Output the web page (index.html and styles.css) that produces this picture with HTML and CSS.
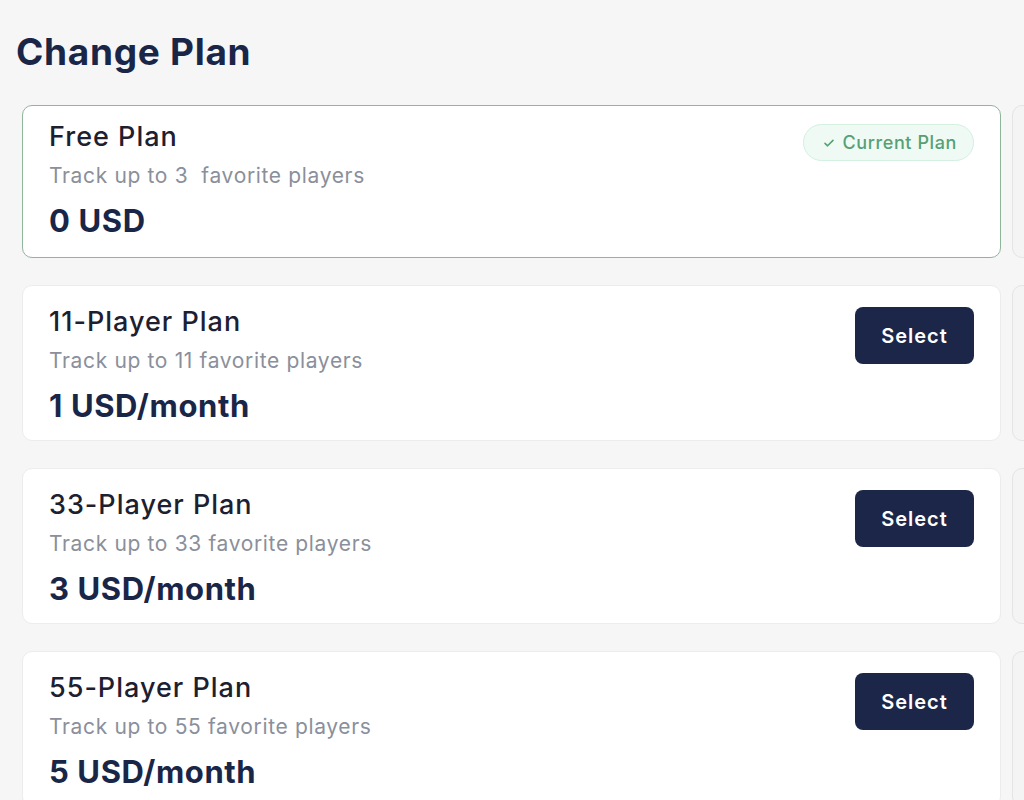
FILE: index.html
```html
<!doctype html>
<html lang="en">
  <head>
    <meta charset="UTF-8" />
    <meta name="viewport" content="width=device-width, initial-scale=1.0" />
    <title>Change Plan</title>
    <link rel="stylesheet" href="styles.css">
  </head>
  <body>
    <main class="page">
      <h1>Change Plan</h1>

      <div class="plans">
        <div class="plan-card current">
          <div class="plan-info">
            <div class="plan-name">Free Plan</div>
            <div class="plan-desc">Track up to 3&nbsp; favorite players</div>
            <div class="plan-price">0 USD</div>
          </div>
          <span class="badge">
            <svg width="12" height="12" viewBox="0 0 12 12" fill="none">
              <path d="M2 6.3 4.6 8.8 10 3.4" stroke="currentColor" stroke-width="1.6" stroke-linecap="round" stroke-linejoin="round" />
            </svg>
            Current Plan
          </span>
        </div>
        <div class="plan-card side"></div>

        <div class="plan-card">
          <div class="plan-info">
            <div class="plan-name">11-Player Plan</div>
            <div class="plan-desc">Track up to 11 favorite players</div>
            <div class="plan-price">1 USD/month</div>
          </div>
          <button class="button">Select</button>
        </div>
        <div class="plan-card side"></div>

        <div class="plan-card">
          <div class="plan-info">
            <div class="plan-name">33-Player Plan</div>
            <div class="plan-desc">Track up to 33 favorite players</div>
            <div class="plan-price">3 USD/month</div>
          </div>
          <button class="button">Select</button>
        </div>
        <div class="plan-card side"></div>

        <div class="plan-card">
          <div class="plan-info">
            <div class="plan-name">55-Player Plan</div>
            <div class="plan-desc">Track up to 55 favorite players</div>
            <div class="plan-price">5 USD/month</div>
          </div>
          <button class="button">Select</button>
        </div>
        <div class="plan-card side"></div>
      </div>
    </main>
  </body>
</html>
```

FILE: styles.css
```css
body {
  margin: 0;
  background-color: #f6f6f6;
  font-family: Inter, "Noto Sans", sans-serif;
  color: #1c2030;
  overflow: hidden;
}
.page {
  padding: 30px 0 0 16px;
}
h1 {
  margin: 0 0 31px;
  font-size: 37px;
  line-height: 44px;
  font-weight: 700;
  letter-spacing: 0.7px;
  color: #1a2648;
}
.plans {
  display: grid;
  grid-template-columns: 979px 979px;
  column-gap: 11px;
  row-gap: 27px;
  margin-left: 6px;
}
.plan-card {
  display: flex;
  justify-content: space-between;
  align-items: flex-start;
  height: 156px;
  box-sizing: border-box;
  padding: 20px 26px 16px 26px;
  background-color: #fff;
  border: 1px solid #ececec;
  border-radius: 10px;
}
.plan-card.side {
  height: auto;
  background-color: #f4f4f4;
  border-color: #e4e4e4;
}
.plan-card.current {
  height: 153px;
  padding-top: 15px;
  border: 1.5px solid #8fb59b;
}
.plan-name {
  font-size: 27px;
  line-height: 32px;
  font-weight: 500;
  letter-spacing: 1px;
  color: #1c2030;
}
.plan-desc {
  margin-top: 9px;
  font-size: 21px;
  line-height: 28px;
  letter-spacing: 0.65px;
  color: #8a8f9b;
}
.plan-price {
  margin-top: 13px;
  font-size: 31px;
  line-height: 36px;
  font-weight: 700;
  letter-spacing: 0.6px;
  color: #1a2648;
}
.current .plan-price {
  margin-top: 13px;
}
.badge {
  display: inline-flex;
  align-items: center;
  gap: 8px;
  margin-top: 3px;
  height: 37px;
  box-sizing: border-box;
  padding: 0 16px 0 19px;
  background-color: #effaf4;
  border: 1px solid #d3f0e1;
  border-radius: 19px;
  font-size: 18px;
  font-weight: 500;
  letter-spacing: 0.6px;
  color: #56a074;
}
.button {
  width: 119px;
  height: 57px;
  margin-top: 1px;
  background-color: #1b2648;
  color: #fff;
  border: none;
  border-radius: 8px;
  font-family: inherit;
  font-size: 20px;
  font-weight: 600;
  letter-spacing: 1px;
  cursor: pointer;
}
.button:hover {
  background-color: #26335c;
}
```
